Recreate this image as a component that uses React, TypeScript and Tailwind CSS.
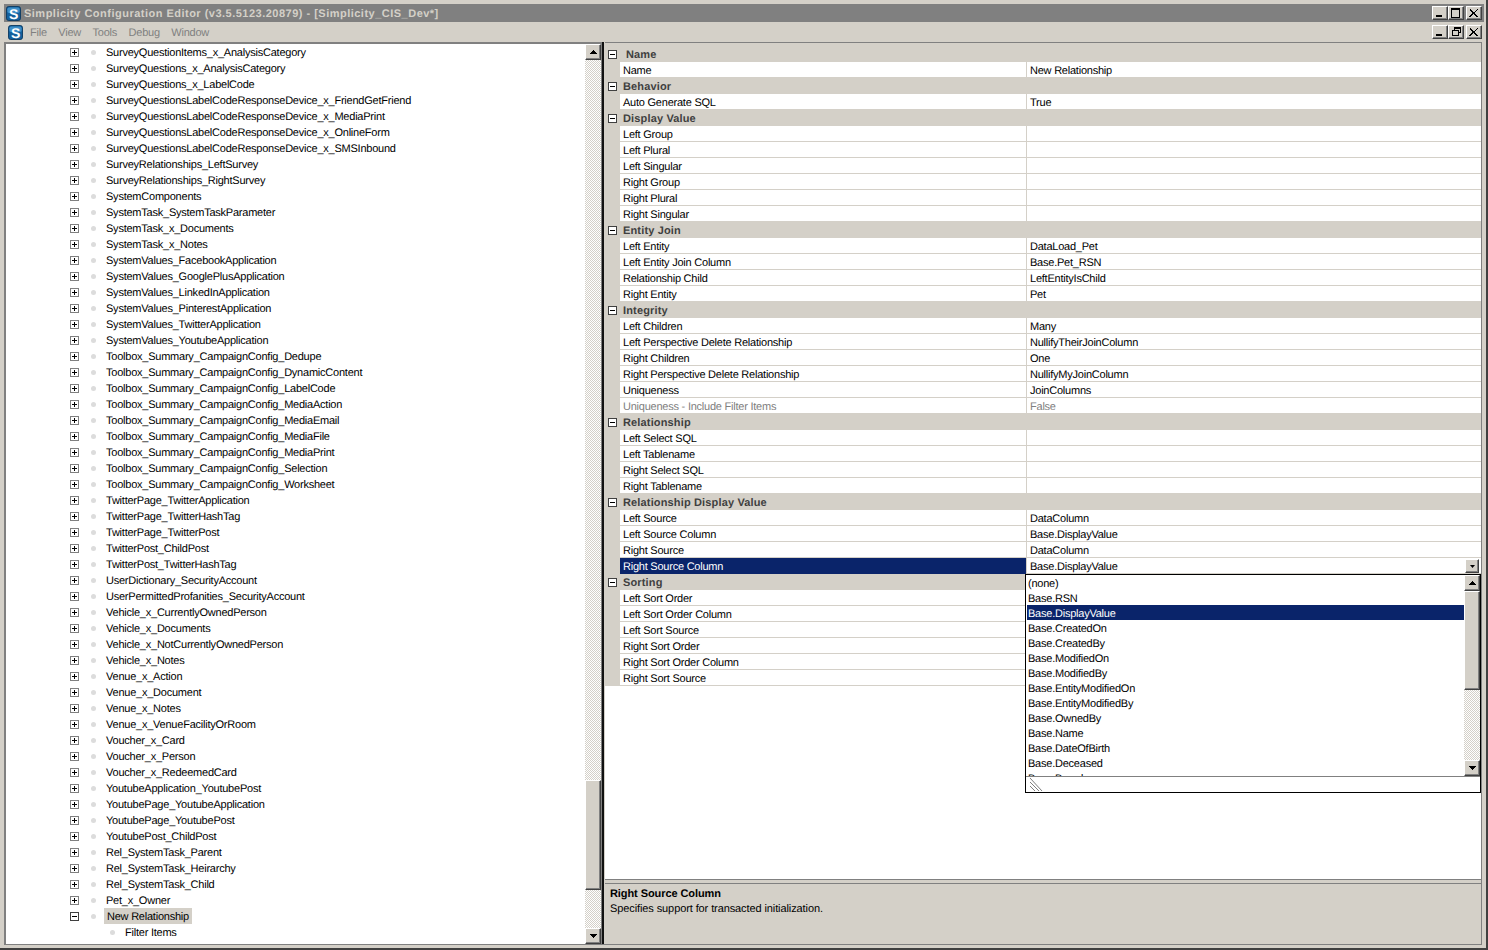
import React from "react";

const tree = [
  "SurveyQuestionItems_x_AnalysisCategory","SurveyQuestions_x_AnalysisCategory","SurveyQuestions_x_LabelCode",
  "SurveyQuestionsLabelCodeResponseDevice_x_FriendGetFriend","SurveyQuestionsLabelCodeResponseDevice_x_MediaPrint",
  "SurveyQuestionsLabelCodeResponseDevice_x_OnlineForm","SurveyQuestionsLabelCodeResponseDevice_x_SMSInbound",
  "SurveyRelationships_LeftSurvey","SurveyRelationships_RightSurvey","SystemComponents","SystemTask_SystemTaskParameter",
  "SystemTask_x_Documents","SystemTask_x_Notes","SystemValues_FacebookApplication","SystemValues_GooglePlusApplication",
  "SystemValues_LinkedInApplication","SystemValues_PinterestApplication","SystemValues_TwitterApplication","SystemValues_YoutubeApplication",
  "Toolbox_Summary_CampaignConfig_Dedupe","Toolbox_Summary_CampaignConfig_DynamicContent","Toolbox_Summary_CampaignConfig_LabelCode",
  "Toolbox_Summary_CampaignConfig_MediaAction","Toolbox_Summary_CampaignConfig_MediaEmail","Toolbox_Summary_CampaignConfig_MediaFile",
  "Toolbox_Summary_CampaignConfig_MediaPrint","Toolbox_Summary_CampaignConfig_Selection","Toolbox_Summary_CampaignConfig_Worksheet",
  "TwitterPage_TwitterApplication","TwitterPage_TwitterHashTag","TwitterPage_TwitterPost","TwitterPost_ChildPost","TwitterPost_TwitterHashTag",
  "UserDictionary_SecurityAccount","UserPermittedProfanities_SecurityAccount","Vehicle_x_CurrentlyOwnedPerson","Vehicle_x_Documents",
  "Vehicle_x_NotCurrentlyOwnedPerson","Vehicle_x_Notes","Venue_x_Action","Venue_x_Document","Venue_x_Notes","Venue_x_VenueFacilityOrRoom",
  "Voucher_x_Card","Voucher_x_Person","Voucher_x_RedeemedCard","YoutubeApplication_YoutubePost","YoutubePage_YoutubeApplication",
  "YoutubePage_YoutubePost","YoutubePost_ChildPost","Rel_SystemTask_Parent","Rel_SystemTask_Heirarchy","Rel_SystemTask_Child","Pet_x_Owner",
];

type Row = { c: string } | { n: string; v?: string; dim?: boolean; sel?: boolean };
const rows: Row[] = [
  { c: "Name" }, { n: "Name", v: "New Relationship" },
  { c: "Behavior" }, { n: "Auto Generate SQL", v: "True" },
  { c: "Display Value" }, { n: "Left Group" }, { n: "Left Plural" }, { n: "Left Singular" }, { n: "Right Group" }, { n: "Right Plural" }, { n: "Right Singular" },
  { c: "Entity Join" }, { n: "Left Entity", v: "DataLoad_Pet" }, { n: "Left Entity Join Column", v: "Base.Pet_RSN" }, { n: "Relationship Child", v: "LeftEntityIsChild" }, { n: "Right Entity", v: "Pet" },
  { c: "Integrity" }, { n: "Left Children", v: "Many" }, { n: "Left Perspective Delete Relationship", v: "NullifyTheirJoinColumn" }, { n: "Right Children", v: "One" }, { n: "Right Perspective Delete Relationship", v: "NullifyMyJoinColumn" }, { n: "Uniqueness", v: "JoinColumns" }, { n: "Uniqueness - Include Filter Items", v: "False", dim: true },
  { c: "Relationship" }, { n: "Left Select SQL" }, { n: "Left Tablename" }, { n: "Right Select SQL" }, { n: "Right Tablename" },
  { c: "Relationship Display Value" }, { n: "Left Source", v: "DataColumn" }, { n: "Left Source Column", v: "Base.DisplayValue" }, { n: "Right Source", v: "DataColumn" }, { n: "Right Source Column", v: "Base.DisplayValue", sel: true },
  { c: "Sorting" }, { n: "Left Sort Order" }, { n: "Left Sort Order Column" }, { n: "Left Sort Source" }, { n: "Right Sort Order" }, { n: "Right Sort Order Column" }, { n: "Right Sort Source" },
];

const options = ["(none)","Base.RSN","Base.DisplayValue","Base.CreatedOn","Base.CreatedBy","Base.ModifiedOn","Base.ModifiedBy","Base.EntityModifiedOn","Base.EntityModifiedBy","Base.OwnedBy","Base.Name","Base.DateOfBirth","Base.Deceased","Base.Breed"];

const Expander = ({ open = false, dark = false }: { open?: boolean; dark?: boolean }) => (
  <svg width="9" height="9" viewBox="0 0 9 9" className="shrink-0" shapeRendering="crispEdges">
    <rect x="0.5" y="0.5" width="8" height="8" fill="#fff" stroke={dark ? "#404040" : "#808080"} />
    <rect x="2" y="4" width="5" height="1" fill="#000" />
    {!open && <rect x="4" y="2" width="1" height="5" fill="#000" />}
  </svg>
);

const Dot = () => <span className="block w-[5px] h-[5px] rounded-full bg-[#dcdcdc] shrink-0" />;

const Logo = ({ size }: { size: number }) => (
  <svg width={size} height={size} viewBox="0 0 16 16" className="shrink-0">
    <rect x="0.5" y="0.5" width="15" height="15" rx="2.5" fill="#14609c" stroke="#0d3a60" />
    <rect x="1.5" y="1.5" width="13" height="6" rx="2" fill="#3f8fc8" />
    <text x="8" y="13.400" textAnchor="middle" fontSize="15" fontWeight="700" fill="#fff" fontFamily="Liberation Sans, sans-serif">S</text>
  </svg>
);

const Arrow = ({ dir }: { dir: "up" | "down" }) => (
  <svg width="7" height="4" viewBox="0 0 7 4" shapeRendering="crispEdges">
    {dir === "up" ? <path d="M3 0h1v1h1v1h1v1h1v1H0V3h1V2h1V1h1z" fill="#000" /> : <path d="M0 0h7v1H6v1H5v1H4v1H3V3H2V2H1V1H0z" fill="#000" />}
  </svg>
);

const raised = "bg-[#d4d0c8] border border-t-white border-l-white border-r-[#404040] border-b-[#404040] shadow-[inset_-1px_-1px_0_#808080]";
const hatch = "bg-[repeating-conic-gradient(#d4d0c8_0_25%,#ffffff_0_50%)] bg-[length:2px_2px]";

const ScrollBtn = ({ dir }: { dir: "up" | "down" }) => (
  <div className={`${raised} w-4 h-4 shrink-0 flex items-center justify-center`}><Arrow dir={dir} /></div>
);

const CapBtn = ({ kind }: { kind: "min" | "max" | "close" | "restore" }) => (
  <div className={`${raised} w-4 h-[14px] shrink-0 flex items-center justify-center`}>
    <svg width="12" height="10" viewBox="0 0 12 10" shapeRendering="crispEdges">
      {kind === "min" && <rect x="2" y="7" width="6" height="2" fill="#000" />}
      {kind === "max" && <path d="M1 0h9v10H1zM2 2v7h7V2z" fill="#000" fillRule="evenodd" />}
      {kind === "close" && <path d="M2 1l3.5 3.5L9 1l1 1-3.5 3L10 8.500 9 9.500 5.500 6 2 9.500 1 8.500 4.500 5 1 2z" fill="#000" />}
      {kind === "restore" && <path d="M4 0h7v6H9v3H2V3h2zM5 1v2h4v2h1V2H5V1zM3 4v4h5V4z" fill="#000" fillRule="evenodd" />}
    </svg>
  </div>
);

export default function App() {
  return (
    <div className="w-[1488px] h-[950px] overflow-hidden relative bg-[#d4d0c8] border-r-2 border-b-2 border-r-[#404040] border-b-[#404040] flex flex-col pt-[4px] pl-[4px] pr-[4px] text-[11px] leading-[18px] tracking-[-0.23px] [text-rendering:geometricPrecision] text-black [font-family:Liberation_Sans,Arimo,Arial,sans-serif]">
      <div className="h-[18px] shrink-0 bg-[#808080] flex items-center pl-[2px] pr-[2px] mr-[-2px]">
        <Logo size={15} />
        <span className="block h-4 ml-[3px] text-[#d4d0c8] font-bold text-[11px] tracking-[0.49px] whitespace-nowrap">Simplicity Configuration Editor (v3.5.5123.20879) - [Simplicity_CIS_Dev*]</span>
        <div className="ml-auto flex items-center">
          <CapBtn kind="min" /><CapBtn kind="max" /><div className="w-[2px]" /><CapBtn kind="close" />
        </div>
      </div>
      <div className="h-[20px] shrink-0 flex items-center pl-[4px] text-[#808080]">
        <Logo size={15} />
        <div className="flex h-4 ml-[7px] gap-[11.5px]">
          <span>File</span><span>View</span><span>Tools</span><span>Debug</span><span>Window</span>
        </div>
        <div className="ml-auto flex items-center">
          <CapBtn kind="min" /><CapBtn kind="restore" /><div className="w-[2px]" /><CapBtn kind="close" />
        </div>
      </div>
      <div className="flex-1 min-h-0 flex border-b border-b-[#808080] mb-[3px]">
        <div className="w-[581px] shrink-0 bg-white border-t-2 border-l-2 border-t-[#808080] border-l-[#808080] overflow-hidden">
          {tree.map((t) => (
            <div key={t} className="h-4 flex items-center pl-[64px] whitespace-nowrap">
              <Expander />
              <span className="ml-[12px]"><Dot /></span>
              <span className="block h-4 ml-[10px]">{t}</span>
            </div>
          ))}
          <div className="h-4 flex items-center pl-[64px] whitespace-nowrap">
            <Expander open dark />
            <span className="ml-[12px]"><Dot /></span>
            <span className="block h-4 ml-[8px] px-[3px] bg-[#d4d0c8]">New Relationship</span>
          </div>
          <div className="h-4 flex items-center pl-[104px] whitespace-nowrap">
            <Dot /><span className="block h-4 ml-[10px]">Filter Items</span>
          </div>
          <div className="h-4 pl-[82px] whitespace-nowrap">Lookups</div>
        </div>
        <div className="w-4 shrink-0 flex flex-col border-t-2 border-t-[#808080]">
          <ScrollBtn dir="up" />
          <div className={`flex-1 flex flex-col justify-end pb-[38px] ${hatch}`}>
            <div className={`${raised} h-[110px] w-full`} />
          </div>
          <ScrollBtn dir="down" />
        </div>
        <div className="w-[4px] shrink-0 border-l border-l-[#808080] border-r border-r-[#d4d0c8] bg-[#111111]" />
        <div className="flex-1 min-w-0 flex flex-col border-t border-t-[#808080] border-r border-r-[#808080]">
          <div className="flex-1 min-h-0 pt-[3px] bg-white border-b border-b-[#808080] bg-clip-content relative">
            <div className="bg-white">
              {rows.map((r, i) =>
                "c" in r ? (
                  <div key={i} className="h-4 bg-[#d4d0c8] flex items-center pl-[3px]">
                    <Expander open dark />
                    <span className={`block h-4 ml-[6px] font-bold text-[#404040] tracking-[0.15px] whitespace-nowrap ${r.c === "Name" ? "pl-[3px]" : ""}`}>{r.c}</span>
                  </div>
                ) : (
                  <div key={i} className={`h-4 flex border-l-[15px] border-l-[#d4d0c8] ${r.dim ? "text-[#808080]" : ""}`}>
                    <div className={`w-[406px] shrink-0 pl-[3px] border-b whitespace-nowrap ${r.sel ? "bg-[#0a246a] text-white border-b-[#0a246a]" : "border-b-[#d4d0c8]"}`}>{r.n}</div>
                    <div className="flex-1 min-w-0 border-l border-l-[#d4d0c8] border-b border-b-[#d4d0c8] pl-[3px] whitespace-nowrap flex justify-between">
                      <span className="block h-4">{r.v}</span>
                      {r.sel && <div className={`${raised} w-[14px] h-[14px] mt-[1px] mr-[2px] flex items-center justify-center`}><svg width="5" height="3" viewBox="0 0 5 3"><path d="M0 0h5L2.500 3z" fill="#000" /></svg></div>}
                    </div>
                  </div>
                )
              )}
            </div>
          </div>
          <div className="h-[64px] shrink-0 pt-[3px]">
            <div className="h-[61px] border-t border-t-[#808080] px-[5px] pt-[1px]">
              <div className="h-4 font-bold tracking-[-0.08px] whitespace-nowrap">Right Source Column</div>
              <div className="h-4 tracking-[-0.1px] whitespace-nowrap -mt-[1px]">Specifies support for transacted initialization.</div>
            </div>
          </div>
        </div>
      </div>
      <div className="absolute left-[1025px] top-[574px] w-[456px] h-[219px] bg-white border border-black flex flex-col">
        <div className="flex-1 min-h-0 flex border-b border-b-[#808080]">
          <div className="flex-1 min-w-0 pl-[1px] overflow-hidden">
            {options.map((o) => (
              <div key={o} className={`h-[15px] pl-[1px] whitespace-nowrap overflow-visible ${o === "Base.DisplayValue" ? "bg-[#0a246a] text-white" : ""}`}>{o}</div>
            ))}
          </div>
          <div className="w-4 shrink-0 flex flex-col">
            <ScrollBtn dir="up" />
            <div className={`flex-1 ${hatch}`}>
              <div className={`${raised} h-[99px] w-full`} />
            </div>
            <ScrollBtn dir="down" />
          </div>
        </div>
        <div className="h-[15px] shrink-0 pl-[2px]">
          <svg width="15" height="15" viewBox="0 0 15 15">
            <path d="M2 1l12 13M2 5l9 9M2 9l5 5" stroke="#808080" strokeWidth="1" fill="none" />
          </svg>
        </div>
      </div>
    </div>
  );
}
